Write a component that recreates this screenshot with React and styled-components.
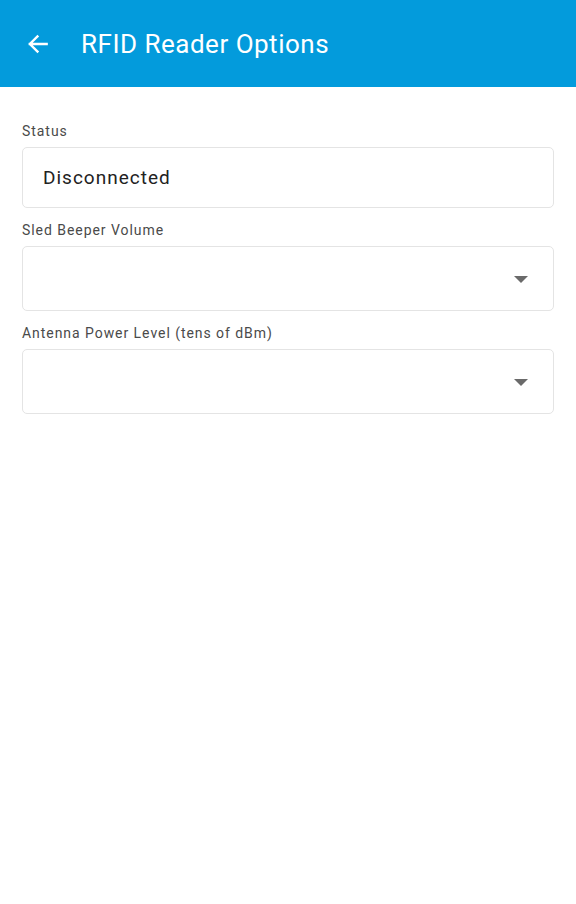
import React from "react";
import styled, { createGlobalStyle } from "styled-components";

const Global = createGlobalStyle`
  html, body { margin: 0; padding: 0; background: #fff; }
  body { font-family: Roboto, "Noto Sans", sans-serif; }
`;

const Page = styled.div`
  width: 576px;
  min-height: 904px;
  background: #fff;
`;

const Header = styled.header`
  height: 87px;
  background: #039bdc;
  display: flex;
  align-items: center;
  padding: 0 0 0 24px;
  box-sizing: border-box;
  gap: 29px;
`;

const BackButton = styled.button`
  background: none;
  border: 0;
  padding: 0;
  width: 28px;
  height: 28px;
  display: flex;
  align-items: center;
  justify-content: center;
  color: #fff;
  cursor: pointer;
`;

const Title = styled.h1`
  margin: 0;
  font-family: Roboto, sans-serif;
  font-weight: 400;
  font-size: 26px;
  color: #fff;
  letter-spacing: 0.5px;
`;

const Form = styled.div`
  display: flex;
  flex-direction: column;
  padding: 36px 22px 0 22px;
`;

const Field = styled.div`
  display: flex;
  flex-direction: column;
  margin-bottom: 14px;
`;

const Label = styled.label`
  font-size: 14px;
  color: #4a4a4a;
  letter-spacing: 0.95px;
  line-height: 16px;
  margin-bottom: 8px;
`;

const Box = styled.div`
  height: ${(p) => p.$h}px;
  box-sizing: border-box;
  border: 1px solid #e4e4e4;
  border-radius: 5px;
  display: flex;
  align-items: center;
  justify-content: space-between;
  padding: 0 25px 0 20px;
  font-size: 19px;
  color: #222;
  letter-spacing: 1px;
`;

const Caret = styled.span`
  width: 0;
  height: 0;
  border-left: 7px solid transparent;
  border-right: 7px solid transparent;
  border-top: 7px solid #6a6a6a;
  margin-top: 2px;
`;

export default function App() {
  return (
    <Page>
      <Global />
      <Header>
        <BackButton aria-label="Back">
          <svg width="26" height="26" viewBox="0 0 24 24" fill="none">
            <path d="M20 12H4.5M11.5 5l-7 7 7 7" stroke="#fff" strokeWidth="2.2" strokeLinecap="square" />
          </svg>
        </BackButton>
        <Title>RFID Reader Options</Title>
      </Header>
      <Form>
        <Field>
          <Label>Status</Label>
          <Box $h={61}>Disconnected</Box>
        </Field>
        <Field>
          <Label>Sled Beeper Volume</Label>
          <Box $h={65}>
            <span />
            <Caret />
          </Box>
        </Field>
        <Field>
          <Label>Antenna Power Level (tens of dBm)</Label>
          <Box $h={65}>
            <span />
            <Caret />
          </Box>
        </Field>
      </Form>
    </Page>
  );
}
